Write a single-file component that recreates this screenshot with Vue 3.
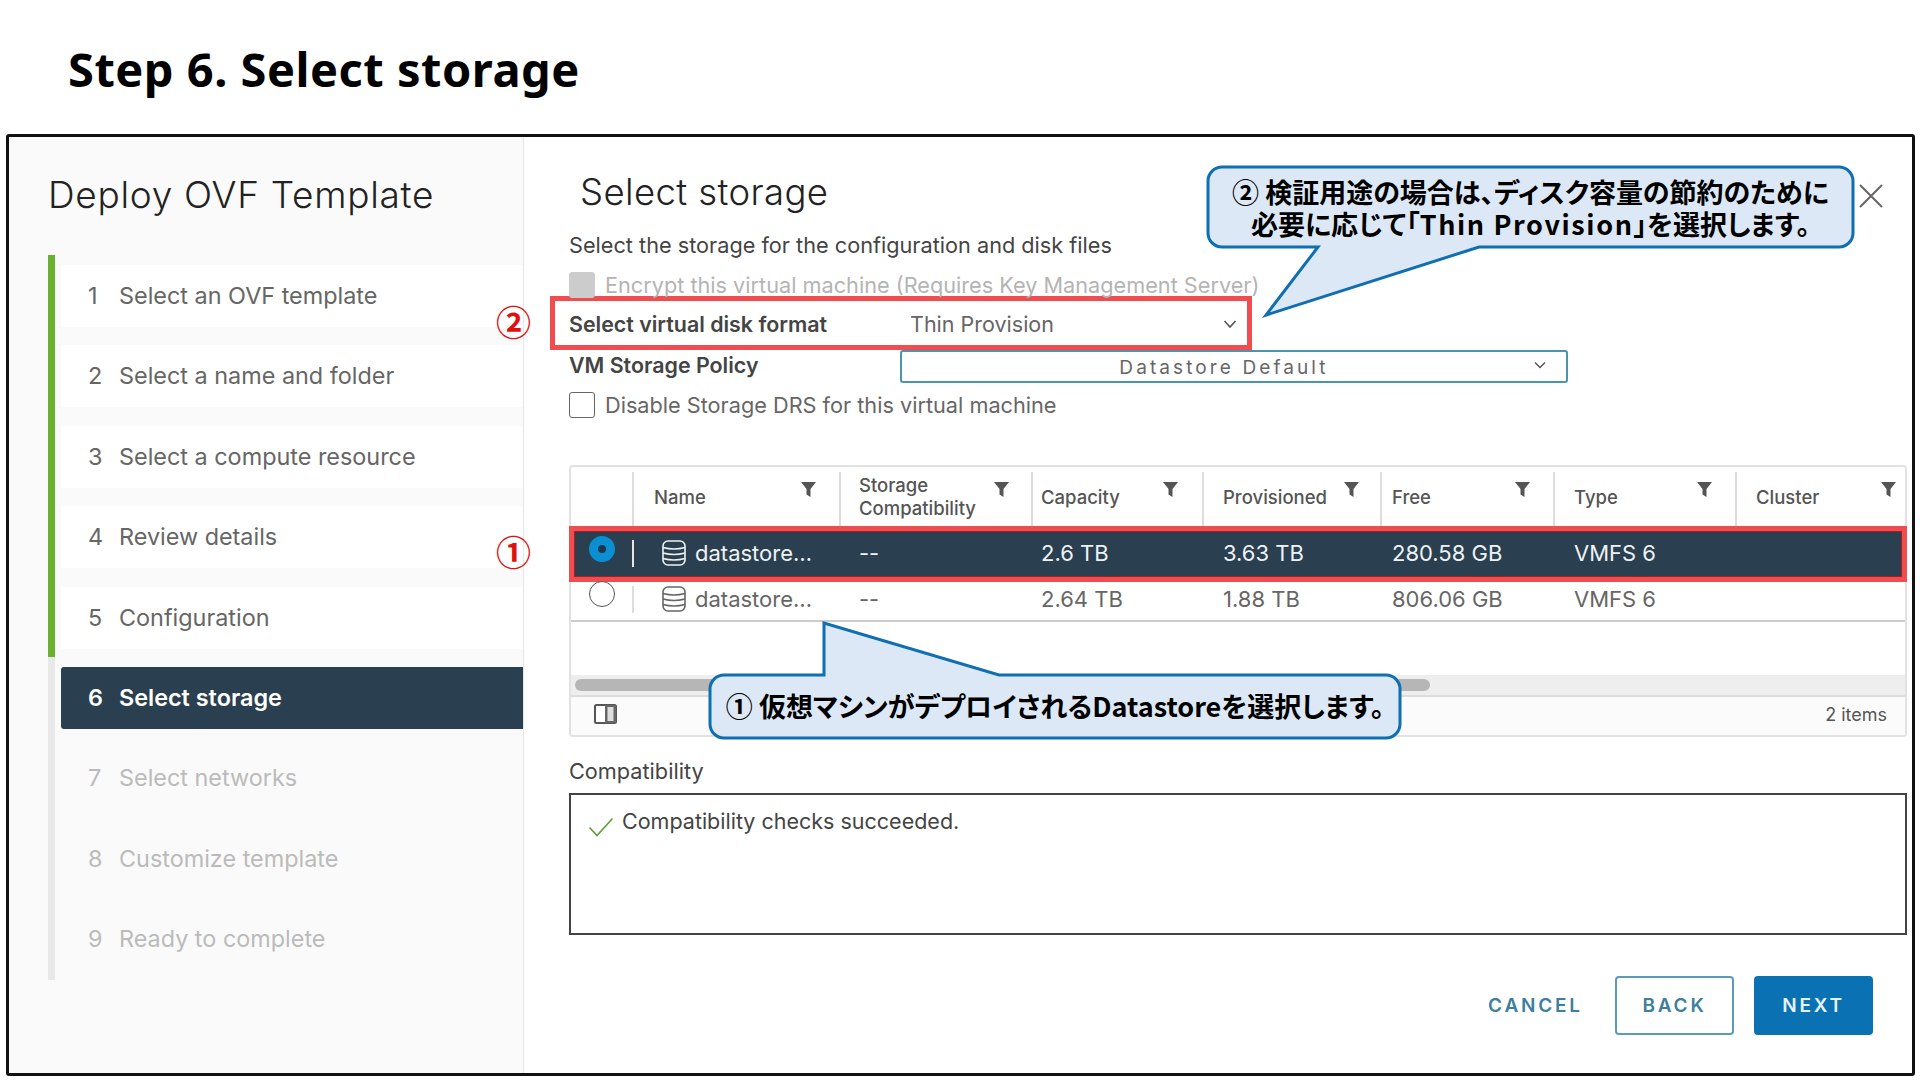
<script setup>
const steps = [
  { n: 1, label: "Select an OVF template", state: "done" },
  { n: 2, label: "Select a name and folder", state: "done" },
  { n: 3, label: "Select a compute resource", state: "done" },
  { n: 4, label: "Review details", state: "done" },
  { n: 5, label: "Configuration", state: "done" },
  { n: 6, label: "Select storage", state: "active" },
  { n: 7, label: "Select networks", state: "todo" },
  { n: 8, label: "Customize template", state: "todo" },
  { n: 9, label: "Ready to complete", state: "todo" },
];

const columns = [
  { key: "compat", label: "Storage Compatibility", pad: 18, right: 22 },
  { key: "capacity", label: "Capacity", pad: 8, right: 24 },
  { key: "provisioned", label: "Provisioned", pad: 19, right: 21 },
  { key: "free", label: "Free", pad: 10, right: 23 },
  { key: "type", label: "Type", pad: 19, right: 23 },
  { key: "cluster", label: "Cluster", pad: 19, right: 10 },
];

const rows = [
  { id: 1, name: "datastore…", compat: "--", capacity: "2.6 TB", provisioned: "3.63 TB", free: "280.58 GB", type: "VMFS 6", cluster: "", selected: true },
  { id: 2, name: "datastore…", compat: "--", capacity: "2.64 TB", provisioned: "1.88 TB", free: "806.06 GB", type: "VMFS 6", cluster: "", selected: false },
];
</script>

<template>
  <div class="page">
    <h1 class="title">Step 6. Select storage</h1>

    <div class="frame">
      <aside class="side">
        <h2 class="side-title">Deploy OVF Template</h2>
        <div class="wizard">
          <div class="rail"><div class="rail-done"></div></div>
          <ul class="steps">
            <li v-for="s in steps" :key="s.n" class="step" :class="s.state">
              <span class="step-n">{{ s.n }}</span>
              <span>{{ s.label }}</span>
            </li>
          </ul>
        </div>
      </aside>

      <main class="main">
        <h2 class="main-title">Select storage</h2>
        <p class="desc">Select the storage for the configuration and disk files</p>

        <div class="check-row disabled">
          <span class="box"></span>
          <span>Encrypt this virtual machine (Requires Key Management Server)</span>
        </div>

        <div class="format-row">
          <span class="field-label">Select virtual disk format</span>
          <span class="format-value">Thin Provision</span>
          <svg class="format-chevron" width="14" height="10" viewBox="0 0 14 10"><path d="M1.5 2 7 8l5.5-6" fill="none" stroke="#555" stroke-width="1.6" /></svg>
        </div>

        <div class="policy-row">
          <span class="field-label">VM Storage Policy</span>
          <div class="policy-select">
            <span class="policy-value">Datastore Default</span>
            <svg class="policy-chevron" width="12" height="8" viewBox="0 0 12 8"><path d="M1 1.5 6 6.5l5-5" fill="none" stroke="#555" stroke-width="1.5" /></svg>
          </div>
        </div>

        <div class="check-row drs">
          <span class="box"></span>
          <span>Disable Storage DRS for this virtual machine</span>
        </div>

        <div class="grid">
          <div class="grid-head grid-cols">
            <div class="head-cell"></div>
            <div class="head-cell head-name">
              <span>Name</span>
              <svg class="funnel" width="15" height="15" viewBox="0 0 15 15"><path d="M0 0H15L9.5 7V15L5.5 12.5V7Z" fill="#555" /></svg>
            </div>
            <div
              v-for="c in columns"
              :key="c.key"
              class="head-cell"
              :style="{ paddingLeft: c.pad + 'px', paddingRight: c.right + 'px' }"
            >
              <span class="head-text">{{ c.label }}</span>
              <svg class="funnel" width="15" height="15" viewBox="0 0 15 15"><path d="M0 0H15L9.5 7V15L5.5 12.5V7Z" fill="#555" /></svg>
            </div>
          </div>

          <div v-for="r in rows" :key="r.id" class="grid-row grid-cols" :class="{ selected: r.selected }">
            <div class="radio-cell"><span class="radio"></span></div>
            <div class="name-cell">
              <svg width="24" height="26" viewBox="0 0 24 26" fill="none" stroke="currentColor" stroke-width="1.6">
                <rect x="1" y="1" width="22" height="24" rx="5" />
                <path d="M1 7.5q11 3 22 0M1 13q11 3 22 0M1 18.5q11 3 22 0" />
              </svg>
              <span>{{ r.name }}</span>
            </div>
            <div v-for="c in columns" :key="c.key" class="value-cell" :style="{ paddingLeft: c.pad + 2 + 'px' }">{{ r[c.key] }}</div>
          </div>

          <div class="grid-blank"></div>
          <div class="scroll-track"><div class="scroll-thumb"></div></div>
          <div class="grid-foot">
            <svg class="col-toggle" width="23" height="20" viewBox="0 0 23 20">
              <rect x="1" y="1" width="21" height="18" rx="1.5" fill="#fff" stroke="#555" stroke-width="2" />
              <rect x="11" y="1" width="11" height="18" fill="#666" />
              <rect x="13.5" y="3" width="6" height="14" fill="#ddd" />
            </svg>
            <span>2 items</span>
          </div>
        </div>

        <div class="compat-label">Compatibility</div>
        <div class="compat-box">
          <svg width="26" height="20" viewBox="0 0 26 20"><path d="M1.5 10.5 9 18.5 24.5 1.5" fill="none" stroke="#5c9e3c" stroke-width="1.6" /></svg>
          <span>Compatibility checks succeeded.</span>
        </div>

        <div class="actions">
          <button class="btn link">CANCEL</button>
          <button class="btn outline">BACK</button>
          <button class="btn primary">NEXT</button>
        </div>
      </main>
    </div>

    <!-- annotations pasted over the screenshot -->
    <svg class="close" width="24" height="24" viewBox="0 0 24 24"><path d="M1 1 23 23M23 1 1 23" stroke="#666" stroke-width="2" fill="none" /></svg>

    <span class="marker marker-two">②</span>
    <span class="marker marker-one">①</span>

    <div class="callout callout-two">
      <svg width="680" height="165" viewBox="0 0 680 165">
        <path d="M22 7H639A14 14 0 0 1 653 21V73A14 14 0 0 1 639 87H279L66 155 118 87H22A14 14 0 0 1 8 73V21A14 14 0 0 1 22 7Z" fill="#dce8f5" stroke="#0f6fb0" stroke-width="3" />
      </svg>
      <div class="callout-text">
        <div>② 検証用途の場合は、ディスク容量の節約のために</div>
        <div>必要に応じて「<span class="wide">Thin Provision</span>」を選択します。</div>
      </div>
    </div>

    <div class="callout callout-one">
      <svg width="710" height="130" viewBox="0 0 710 130">
        <path d="M24 60H124V8L299 60H686A14 14 0 0 1 700 74V109A14 14 0 0 1 686 123H24A14 14 0 0 1 10 109V74A14 14 0 0 1 24 60Z" fill="#dce8f5" stroke="#0f6fb0" stroke-width="3" />
      </svg>
      <div class="callout-text">① 仮想マシンがデプロイされるDatastoreを選択します。</div>
    </div>
  </div>
</template>

<style>
html,
body {
  margin: 0;
  background: #fff;
}
</style>

<style scoped>
.page {
  position: relative;
  width: 1920px;
  height: 1080px;
  overflow: hidden;
  background: #fff;
  font-family: Inter, "Noto Sans", sans-serif;
  color: #555;
}

.title {
  margin: 0;
  height: 134px;
  box-sizing: border-box;
  padding: 41px 0 0 68px;
  font-family: "Noto Sans", "DejaVu Sans", sans-serif;
  font-size: 47px;
  line-height: 56px;
  font-weight: 700;
  letter-spacing: 0.5px;
  color: #000;
}

.frame {
  display: flex;
  width: 1909px;
  height: 942px;
  margin-left: 6px;
  box-sizing: border-box;
  border: 3px solid #111;
  border-radius: 3px;
}

.side {
  width: 515px;
  box-sizing: border-box;
  background: #fafafa;
  border-right: 1px solid #e6e6e6;
  padding-left: 39px;
}

.side-title {
  margin: 36px 0 0;
  font-size: 37px;
  line-height: 44px;
  font-weight: 300;
  letter-spacing: 0.7px;
  color: #222;
}

.wizard {
  display: flex;
  margin-top: 38px;
}

.rail {
  flex: none;
  width: 7px;
  height: 725px;
  background: #e8e8e8;
}

.rail-done {
  height: 402px;
  background: #6bb02f;
}

.steps {
  flex: 1;
  margin: 0 0 0 6px;
  padding: 10px 0 0;
  list-style: none;
  display: flex;
  flex-direction: column;
  gap: 18.4px;
}

.step {
  display: flex;
  align-items: center;
  height: 62px;
  box-sizing: border-box;
  padding: 0 0 1px 27px;
  font-size: 23.4px;
  color: #666;
}

.step-n {
  width: 31px;
}

.step.done {
  background: #fff;
}

.step.active {
  background: #2a3f4f;
  color: #fff;
  font-weight: 600;
  border-radius: 3px 0 0 3px;
}

.step.todo {
  color: #bbb;
}

.main {
  flex: 1;
  min-width: 0;
  padding: 37px 5px 0 45px;
}

.main-title {
  width: fit-content;
  margin: 0 0 0 11px;
  font-size: 36.5px;
  line-height: 36px;
  font-weight: 300;
  letter-spacing: 0.4px;
  color: #222;
}

.desc {
  width: fit-content;
  margin: 20px 0 0;
  font-size: 21.7px;
  line-height: 30px;
  color: #444;
}

.check-row {
  display: flex;
  align-items: center;
  gap: 10px;
  height: 30px;
  font-size: 21.7px;
  color: #666;
}

.check-row.disabled {
  margin-top: 10px;
  color: #b4b4b4;
}

.check-row.drs {
  margin-top: 6px;
  height: 31px;
}

.box {
  width: 24px;
  height: 24px;
  border: 1.5px solid #666;
  border-radius: 3px;
}

.disabled .box {
  background: #ccc;
  border-color: #ccc;
}

.format-row {
  display: flex;
  align-items: center;
  width: 702px;
  height: 54px;
  margin: -4px 0 0 -19px;
  padding: 1px 0 0 14px;
  box-sizing: border-box;
  border: 5px solid #f04d50;
}

.field-label {
  width: 331px;
  font-size: 21.4px;
  font-weight: 600;
  color: #444;
}

.format-value {
  flex: 1;
  margin-left: 10px;
  font-size: 21.5px;
  color: #666;
}

.format-chevron {
  margin-right: 10px;
}

.policy-row {
  display: flex;
  align-items: center;
  height: 33px;
}

.policy-row .field-label {
  margin-top: -4px;
}

.policy-select {
  position: relative;
  width: 668px;
  height: 33px;
  box-sizing: border-box;
  border: 2px solid #4a94ae;
  border-radius: 3px;
  display: flex;
  align-items: center;
  justify-content: center;
}

.policy-value {
  font-size: 19px;
  letter-spacing: 3.1px;
  color: #666;
  margin: 1px 20px 0 0;
}

.policy-chevron {
  position: absolute;
  right: 20px;
  top: 9px;
}

.grid {
  display: flex;
  flex-direction: column;
  height: 272px;
  margin-top: 45px;
  box-sizing: border-box;
  border: 2px solid #e2e2e2;
  border-radius: 4px;
}

.grid-cols {
  display: grid;
  grid-template-columns: 61px 207px 192px 171px 178px 173px 182px 1fr;
}

.grid-head {
  height: 62px;
}

.head-cell {
  display: flex;
  justify-content: space-between;
  align-items: center;
  margin: 5px 0 3px;
  padding-bottom: 4px;
  border-left: 2px solid #ddd;
  font-size: 18.5px;
  font-weight: 500;
  color: #555;
  line-height: 23px;
  box-sizing: border-box;
}

.head-cell:first-child {
  border-left: 0;
}

.head-name {
  padding: 0 23px 4px 20px;
}

.head-text {
  width: 125px;
}

.funnel {
  align-self: flex-start;
  margin-top: 10px;
  flex: none;
}

.grid-row {
  align-items: center;
  height: 42px;
  padding-bottom: 2px;
  font-size: 22px;
  color: #666;
  box-sizing: border-box;
  border-bottom: 2px solid #ccc;
}

.grid-row.selected {
  height: 52px;
  margin-top: -1px;
  border-bottom: 0;
  background: #2a3f4f;
  color: #eef2f5;
  outline: 5px solid #f04d50;
  outline-offset: -3px;
  box-shadow: inset 0 0 0 4px #a81c22;
}

.radio-cell {
  display: flex;
  align-items: center;
  height: 100%;
  padding-left: 18px;
}

.radio {
  width: 26px;
  height: 26px;
  box-sizing: border-box;
  border: 1.5px solid #555;
  border-radius: 50%;
  background: #fff;
  transform: translateY(-5px);
}

.selected .radio {
  border: 9px solid #0a90d2;
  background: #17384c;
  transform: translateY(-4px);
}

.name-cell {
  display: flex;
  align-items: center;
  gap: 9px;
  height: 27px;
  padding-left: 28px;
  border-left: 2px solid #ddd;
}

.selected .name-cell {
  border-left-color: #e6e6e6;
}

.value-cell {
  white-space: nowrap;
}

.grid-blank {
  height: 53px;
}

.scroll-track {
  height: 20px;
  background: #eee;
  padding: 4px 0 0 4px;
  box-sizing: border-box;
}

.scroll-thumb {
  width: 855px;
  height: 12px;
  border-radius: 6px;
  background: #b6b6b6;
}

.grid-foot {
  flex: 1;
  display: flex;
  align-items: center;
  justify-content: space-between;
  padding: 0 18px 3px 23px;
  background: #fbfbfb;
  border-top: 2px solid #ddd;
  font-size: 18px;
  color: #555;
}

.col-toggle {
  transform: translateY(-1px);
}

.compat-label {
  width: fit-content;
  margin-top: 19px;
  font-size: 21.7px;
  line-height: 30px;
  color: #444;
}

.compat-box {
  display: flex;
  align-items: flex-start;
  gap: 8px;
  height: 142px;
  margin-top: 7px;
  padding: 11px 0 0 17px;
  box-sizing: border-box;
  border: 2px solid #444;
  font-size: 21.5px;
  line-height: 30px;
  color: #444;
}

.compat-box svg {
  margin-top: 11px;
}

.actions {
  display: flex;
  justify-content: flex-end;
  align-items: center;
  gap: 20px;
  margin: 41px 34px 0 0;
}

.btn {
  width: 119px;
  height: 59px;
  box-sizing: border-box;
  border-radius: 4px;
  font-family: inherit;
  font-size: 19px;
  font-weight: 600;
  letter-spacing: 2.8px;
  background: none;
  border: 2px solid transparent;
  padding: 0;
}

.btn.link {
  color: #3d7f9e;
}

.btn.outline {
  color: #3d7f9e;
  border-color: #5a9bbb;
}

.btn.primary {
  background: #0a72b3;
  border-color: #0a72b3;
  color: #e6f1f8;
}

.close {
  position: absolute;
  left: 1859px;
  top: 184px;
}

.marker {
  position: absolute;
  left: 496px;
  font-family: "Noto Sans CJK JP", sans-serif;
  font-size: 35px;
  line-height: 40px;
  font-weight: 700;
  color: #e01010;
}

.marker-two {
  top: 301px;
}

.marker-one {
  top: 531px;
}

.callout {
  position: absolute;
}

.callout svg {
  display: block;
}

.callout-text {
  position: absolute;
  font-family: "Noto Sans CJK JP", sans-serif;
  font-size: 27px;
  line-height: 32px;
  font-weight: 700;
  font-feature-settings: "palt";
  color: #000;
  text-align: center;
  white-space: nowrap;
}

.wide {
  letter-spacing: 1.6px;
}

.callout-two {
  left: 1200px;
  top: 160px;
}

.callout-two .callout-text {
  left: 8px;
  width: 645px;
  top: 16px;
}

.callout-one {
  left: 700px;
  top: 615px;
}

.callout-one .callout-text {
  left: 10px;
  width: 690px;
  top: 75px;
}
</style>
